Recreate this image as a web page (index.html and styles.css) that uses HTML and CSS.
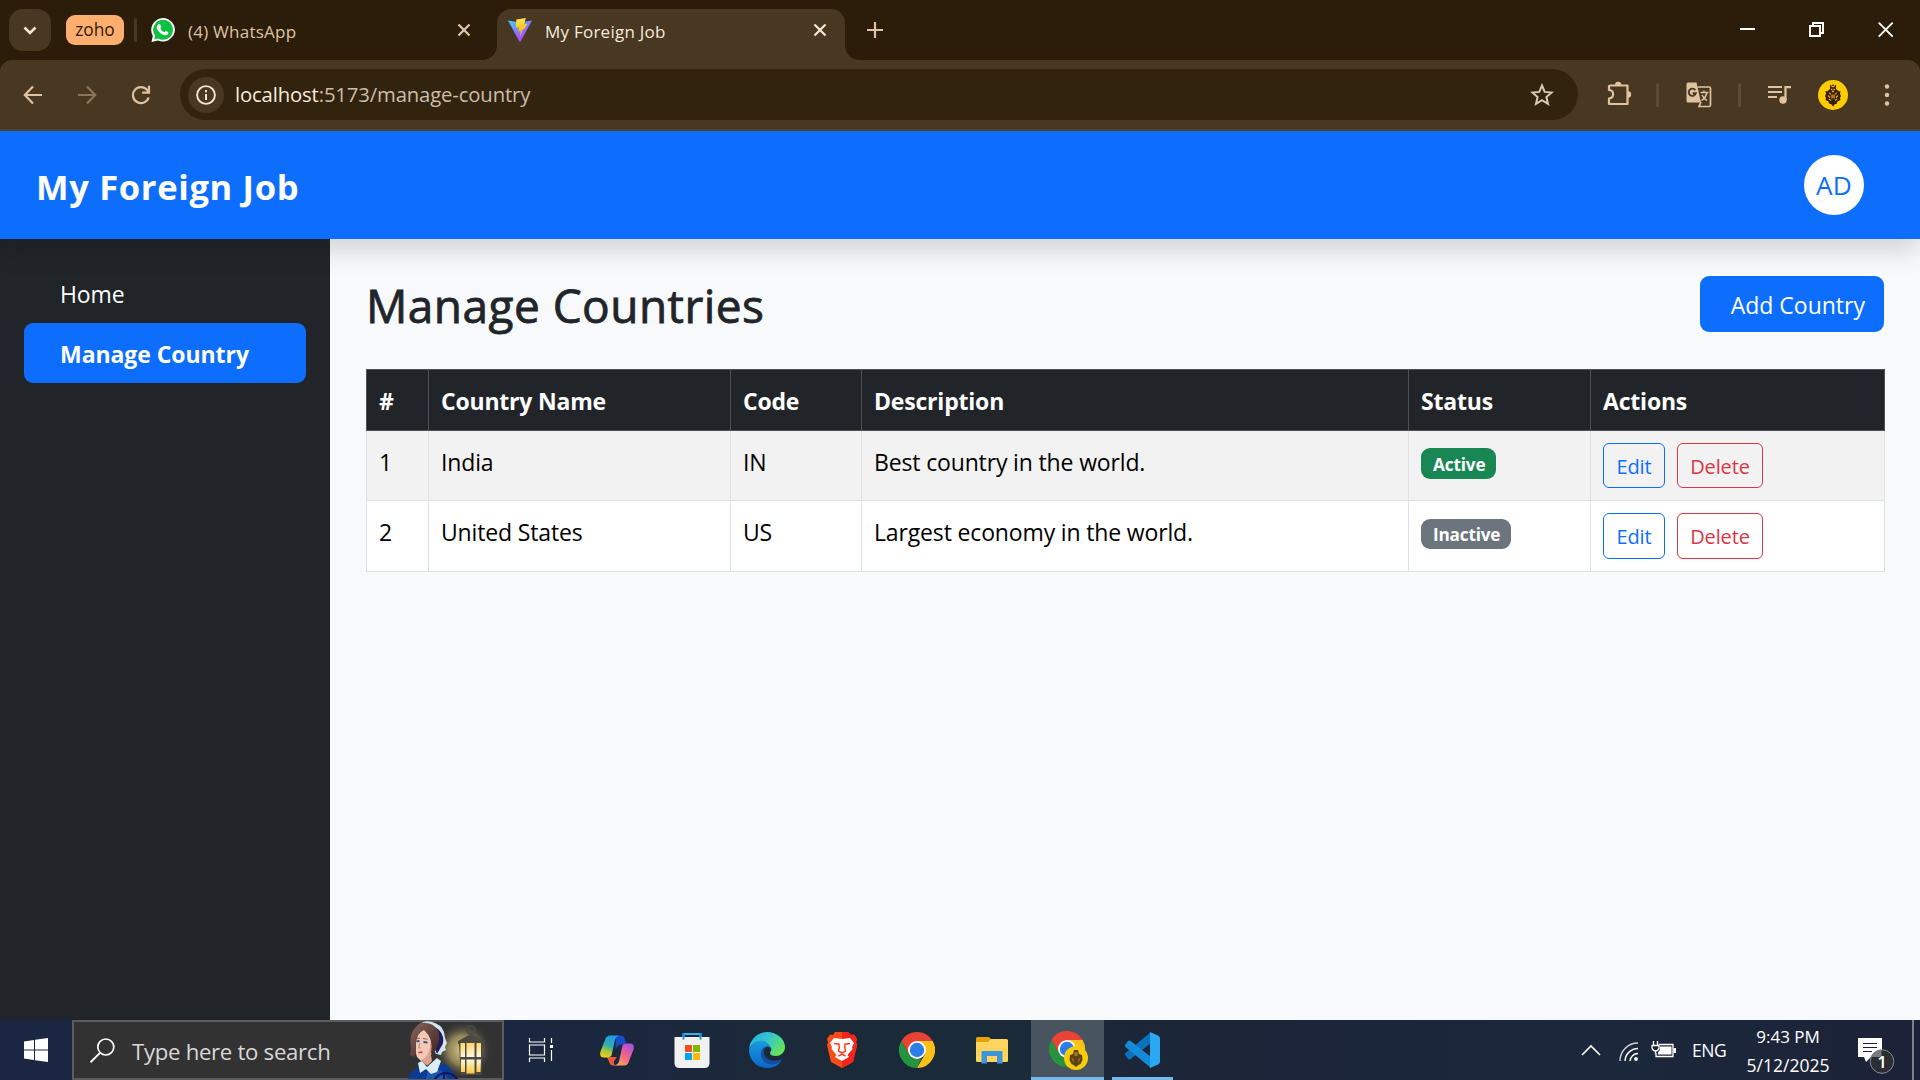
FILE: index.html
```html
<!DOCTYPE html>
<html lang="en">
<head>
<meta charset="utf-8">
<title>My Foreign Job</title>
<link rel="stylesheet" href="styles.css">
</head>
<body>
<div class="screen">
  <div class="tabstrip">
    <div class="tab-search"><svg width="42" height="42" viewBox="0 0 42 42"><path d="M15.500 18.500l5.500 5.500 5.500-5.500" fill="none" stroke="#f3e3cf" stroke-width="2.600"/></svg></div>
    <div class="chip"><span>zoho</span></div>
    <div class="tab-sep"></div>
    <div class="tab tab-whatsapp">
      <svg width="24" height="24" viewBox="0 0 24 24"><path d="M12 0a12 11.700 0 1 1-5 22.400L.500 24l1.300-6A12 12 0 0 1 12 0z" fill="#fff"/><path d="M12 1.800a10 10 0 1 1-5 18.700l-3.800 1.100 1-3.800A10 10 0 0 1 12 1.800z" fill="#0fc143"/><path d="M8.400 6.300c.500 0 .8.100 1 .5l.9 2.100c.1.400-.6 1.200-1 1.600.8 1.700 2.200 3 4 3.800.5-.4 1-1.400 1.500-1.300l2.300 1.100c.5.300.1 1.700-.5 2.300-1.200 1.100-2.900.9-4.500.3-2.700-1-4.900-3.200-6-5.600-.6-1.500-.4-3.100.6-4.200.5-.5 1-.6 1.700-.6z" fill="#fff"/></svg>
      <span class="tab-title">(4) WhatsApp</span>
      <svg width="14" height="14" viewBox="0 0 14 14"><path d="M1.500 1.500l11 11M12.500 1.500l-11 11" stroke="#e0c9ac" stroke-width="2.200"/></svg>
    </div>
    <div class="tab tab-active">
      <svg width="24" height="24" viewBox="0 0 24 24"><defs><linearGradient id="va" x1="0" y1="0" x2=".6" y2="1"><stop offset="0" stop-color="#41d1ff"/><stop offset="1" stop-color="#bd34fe"/></linearGradient><linearGradient id="vb" x1="0" y1="0" x2="0" y2="1"><stop offset="0" stop-color="#ffea50"/><stop offset=".5" stop-color="#ffc61a"/><stop offset="1" stop-color="#ffa800"/></linearGradient></defs><path d="M0 2.500l12 2 12-2L12.600 23.500q-.6.800-1.200 0z" fill="url(#va)"/><path d="M8.300 1.500L17.800 0l-1.700 6.200 3.200-.5-3.100 5.500-1.700.2-2.200 8.200.2-6.700-2 .3.600-4-3.100.5z" fill="url(#vb)"/></svg>
      <span class="tab-title">My Foreign Job</span>
      <svg width="14" height="14" viewBox="0 0 14 14"><path d="M1.500 1.500l11 11M12.500 1.500l-11 11" stroke="#f5e9da" stroke-width="2.200"/></svg>
    </div>
    <svg class="newtab" width="16" height="16" viewBox="0 0 16 16"><path d="M8 0v16M0 8h16" stroke="#dfc3a1" stroke-width="2.200"/></svg>
    <div class="winctl">
      <svg width="16" height="16" viewBox="0 0 16 16"><path d="M0 7h15" stroke="#fff" stroke-width="2"/></svg>
      <svg width="16" height="16" viewBox="0 0 16 16"><path d="M1 4h10v10H1zM4 4V1h10v10h-3" fill="none" stroke="#fff" stroke-width="1.900"/></svg>
      <svg width="16" height="16" viewBox="0 0 16 16"><path d="M.700.700l14 14M14.700.700l-14 14" stroke="#fff" stroke-width="1.900"/></svg>
    </div>
  </div>
  <div class="toolbar-back">
    <div class="toolbar">
      <div class="navbtns">
        <svg width="20" height="20" viewBox="0 0 20 20"><path d="M19 10H2.500M10 1.500L1.800 10l8.200 8.500" fill="none" stroke="#dfc3a1" stroke-width="2.200"/></svg>
        <svg width="20" height="20" viewBox="0 0 20 20"><path d="M1 10h16.500M10 1.500l8.200 8.500-8.200 8.500" fill="none" stroke="#8a755b" stroke-width="2.200"/></svg>
        <svg width="20" height="20" viewBox="0 0 20 20"><path d="M17.600 12.500a8 8 0 1 1-1.300-7.300L18 7.300" fill="none" stroke="#dfc3a1" stroke-width="2.200"/><path d="M18 .8v6.800h-6.800" fill="none" stroke="#dfc3a1" stroke-width="2.200"/></svg>
      </div>
      <div class="urlbar">
        <div class="info"><svg width="20" height="20" viewBox="0 0 20 20"><circle cx="10" cy="10" r="8.900" fill="none" stroke="#f3e3cf" stroke-width="1.900"/><path d="M10 9v6M10 5v2.200" stroke="#f3e3cf" stroke-width="2"/></svg></div>
        <span class="url"><span class="host">localhost</span>:5173/manage-country</span>
        <svg class="star" width="24" height="24" viewBox="0 0 24 24"><path d="M12 2.500l2.700 6.400 6.900.6-5.200 4.500 1.600 6.800-6-3.600-6 3.600 1.600-6.800L2.400 9.500l6.900-.6z" fill="none" stroke="#d8c8b6" stroke-width="2"/></svg>
      </div>
      <svg class="ext" width="26" height="26" viewBox="0 0 26 26"><path d="M3 4.500h17.500v18.500H2v-5.500c5.500-.5 5.500-8 0-8.500V5.500q0-1 1-1z" fill="none" stroke="#dfc3a1" stroke-width="2.200" stroke-linejoin="round"/><path d="M8 4a3.200 3.200 0 0 1 6.400 0zM21 10.300a3.200 3.200 0 0 1 0 6.400z" fill="#dfc3a1"/></svg>
      <i class="bar-sep"></i>
      <svg width="26" height="26" viewBox="0 0 26 26"><path d="M11.500 5H23q1.500 0 1.500 1.500V23q0 1.500-1.500 1.500H13l2-4.500" fill="none" stroke="#dfc3a1" stroke-width="1.700"/><path d="M2 .5h8.500l4.500 20H2q-1.500 0-1.500-1.500V2Q.500.500 2 .500z" fill="#dfc3a1"/><path d="M9.300 8.200A3.600 3.600 0 1 0 9.800 11.300H6.800" fill="none" stroke="#483822" stroke-width="1.900"/><path d="M14.500 10.500h8M18 8.500v2M21 10.500q-1 5-5.500 8M16 13q2 4 5 5.500" fill="none" stroke="#dfc3a1" stroke-width="1.500"/></svg>
      <i class="bar-sep"></i>
      <svg class="playlist" width="24" height="20" viewBox="0 0 24 20"><path d="M0 2h14M0 7h14M0 12h9" stroke="#dfc3a1" stroke-width="2.200"/><path d="M17.500 15V2.100h5.500" fill="none" stroke="#dfc3a1" stroke-width="2.200"/><circle cx="15" cy="15" r="3.700" fill="#dfc3a1"/></svg>
      <svg class="profile" width="30" height="30" viewBox="0 0 30 30"><circle cx="15" cy="15" r="15" fill="#fc0"/><path d="M12 4.500l1.500 1.500L15 4l1.500 2 1.500-1.500V9l3 2.500 1.500-.5-.5 3 1 2-1 2 .5 2-3 1.500-1 2.500-1.500 0-2 2.500-2-2.500-1.500 0-1-2.500-3-1.500.5-2-1-2 1-2-.5-3 1.500.5L12 9z" fill="#33200a"/><path d="M13.500 6.500h3M13 9.500h1.500M15.500 9.500H17M14 11.500h2M11.500 12.500l1 2M18.500 12.500l-1 2M10 15.500l2 2M20 15.500l-2 2M11 19l2 1.500M19 19l-2 1.500M14 14.500v4M16 14.500v4" fill="none" stroke="#f2a51c" stroke-width="1.300"/></svg>
      <svg class="dots" width="6" height="24" viewBox="0 0 6 24"><g fill="#dfc3a1"><circle cx="3" cy="3.500" r="2.200"/><circle cx="3" cy="12" r="2.200"/><circle cx="3" cy="20.500" r="2.200"/></g></svg>
    </div>
  </div>

  <header class="app-header"><div class="brand">My Foreign Job</div><div class="user">AD</div></header>
  <div class="app-body">
    <nav class="sidebar">
      <a class="nav-item">Home</a>
      <a class="nav-item current">Manage Country</a>
    </nav>
    <main class="content">
      <div class="page-head"><h1>Manage Countries</h1><button class="add">Add Country</button></div>
      <table>
        <colgroup><col class="c-num"><col class="c-name"><col class="c-code"><col class="c-desc"><col class="c-status"><col class="c-act"></colgroup>
        <thead><tr><th>#</th><th>Country Name</th><th>Code</th><th>Description</th><th>Status</th><th>Actions</th></tr></thead>
        <tbody>
          <tr><td>1</td><td>India</td><td>IN</td><td>Best country in the world.</td><td><span class="badge green">Active</span></td><td><div class="acts"><button class="btn blue">Edit</button><button class="btn red">Delete</button></div></td></tr>
          <tr><td>2</td><td>United States</td><td>US</td><td>Largest economy in the world.</td><td><span class="badge gray">Inactive</span></td><td><div class="acts"><button class="btn blue">Edit</button><button class="btn red">Delete</button></div></td></tr>
        </tbody>
      </table>
    </main>
  </div>

  <footer class="taskbar">
    <div class="start"><svg width="24" height="24" viewBox="0 0 24 24"><path d="M0 3.400L10 2v9.400H0zM11 1.800L24 0v11.400H11zM0 12.500h10V22L0 20.600zM11 12.500h13V24l-13-1.800z" fill="#fff"/></svg></div>
    <div class="search">
      <svg width="25" height="25" viewBox="0 0 25 25"><circle cx="15.800" cy="9" r="8" fill="none" stroke="#fff" stroke-width="1.700"/><path d="M10 14.800L.500 24.300" stroke="#fff" stroke-width="1.900"/></svg>
      <span>Type here to search</span>
      <svg class="doodle" width="90" height="58" viewBox="0 0 90 58">
        <defs><radialGradient id="glow"><stop offset="0" stop-color="#e3cf82"/><stop offset=".5" stop-color="#a89a66" stop-opacity=".8"/><stop offset="1" stop-color="#323232" stop-opacity="0"/></radialGradient><linearGradient id="lamp" x1="0" y1="0" x2="0" y2="1"><stop offset="0" stop-color="#ffd766"/><stop offset=".5" stop-color="#fffbe6"/><stop offset="1" stop-color="#ffc83d"/></linearGradient><linearGradient id="hair" x1="0" y1="0" x2="1" y2="1"><stop offset="0" stop-color="#8a6557"/><stop offset="1" stop-color="#3a2422"/></linearGradient></defs>
        <circle cx="55" cy="29" r="29" fill="url(#glow)"/>
        <path d="M6 12Q8 5 13 2q5-3 11-1 9 2 12 10l1 6 2 5-2 4 1 3-4 2-1 3-5-1-5-10z" fill="#d3e5ec"/>
        <path d="M24 5q9 3 11 11 1 6-2 10l-4 7-3-8z" fill="#201a63"/>
        <path d="M7 18q3-7 9-11 7 6 7 14l-1 11-1 8-8 0-4-4q-3-8-2-18z" fill="#f3c9b6"/>
        <path d="M23 20l3 5-3 9 1 6-5 5-6-6q6-2 8-9z" fill="#dda08a"/>
        <path d="M3 27Q0 9 13 2q13-2 18 10 1 12-5 20l-3 0q3-14-7-23Q9 12 8 22l0 10-2 4-4-2z" fill="url(#hair)"/>
        <path d="M8.500 20.500l3-.6M15.500 21l4 .6" stroke="#354a86" stroke-width="1.800"/><path d="M9 17.500l3-.4M15 17.500l4.500.7" stroke="#704b40" stroke-width=".8"/><path d="M12 22l-1.500 5h2.500" fill="none" stroke="#c58674"/><path d="M10.500 31.500l4-.2" stroke="#b83f48" stroke-width="1.400"/>
        <path d="M0 58q1-7 7-9l5-6 12 2 8-4q12 4 16 17z" fill="#0b3b93"/>
        <path d="M20 48q12-4 20 10H18z" fill="#1857b6"/>
        <path d="M10 42l4-2 5 6 10-9 4 3-4 11-6 2-5-5-6 4z" fill="#dceef1"/>
        <circle cx="38" cy="65" r="13" fill="none" stroke="#15155c" stroke-width="2.200"/><path d="M36 52v6" stroke="#15155c" stroke-width="2"/>
        <circle cx="63" cy="9" r="4" fill="none" stroke="#4b4a42" stroke-width="2"/><path d="M61 14h4l11 6v3H50v-3z" fill="#4b4a42"/><path d="M51 23h24l-1.500 31H53z" fill="#4b4a42"/><path d="M52.500 22h4.500v14h-4.500zM58.500 22h8v14h-8zM68.500 22H73v14h-4.500zM53 38.500h4v12.500h-4zM58.500 38.500h8v14h-8zM68.500 38.500H73l-.500 12.500h-4z" fill="url(#lamp)"/>
      </svg>
    </div>
    <div class="apps">
      <div class="app view"><svg width="26" height="24" viewBox="0 0 26 24"><path d="M1.500 0v4h15V0M1.500 24v-4h15v4M1.500 7h15v10h-15zM23.500 0v5M23.500 12v11" fill="none" stroke="#fff" stroke-width="1.200"/><path d="M22 7h3v3h-3z" fill="#fff"/></svg></div>
      <div class="app"><svg width="34" height="31" viewBox="0 0 34 31"><defs><linearGradient id="ca" x1=".5" y1="0" x2=".2" y2="1"><stop offset="0" stop-color="#1d9af0"/><stop offset=".45" stop-color="#35b0a4"/><stop offset=".7" stop-color="#a6c93a"/><stop offset="1" stop-color="#f8cc1d"/></linearGradient><linearGradient id="cb" x1=".8" y1="0" x2=".2" y2="1"><stop offset="0" stop-color="#a850e8"/><stop offset=".5" stop-color="#f0608e"/><stop offset="1" stop-color="#ffa25c"/></linearGradient></defs><path d="M16 .500h5q3 0 4 4l1.500 5h-5q-4 0-6 5z" fill="#154cc9"/><path d="M7 22h10l-3 4q-1 4 3 4.500h-4q-3 0-4-4z" fill="#ef5a3b"/><path d="M10 .500h9q-3 1-4 4l-3.500 16q-1 2-4.500 2h-3q-5 0-3.500-6L5 5Q6 .500 10 .500z" fill="url(#ca)"/><path d="M24 30.500h-9q3-1 4-4l3.500-16q1-2 4.500-2h3q5 0 3.500 6L29 26q-1 4.500-5 4.500z" fill="url(#cb)"/></svg></div>
      <div class="app"><svg width="36" height="36" viewBox="0 0 36 36"><path d="M9.500 8V2h17v6" fill="none" stroke="#31b4ee" stroke-width="2.200"/><path d="M.5 5h35v26q0 5-5 5h-25q-5 0-5-5z" fill="#f1f1f1"/><path d="M9.500 1v6.500M26.500 1v6.500" stroke="#168bd1" stroke-width="1.800"/><path d="M11 13h7v7h-7z" fill="#f25022"/><path d="M19 13h7v7h-7z" fill="#7fba00"/><path d="M11 21h7v7h-7z" fill="#00a4ef"/><path d="M19 21h7v7h-7z" fill="#ffb900"/></svg></div>
      <div class="app"><svg width="36" height="36" viewBox="0 0 36 36"><defs><linearGradient id="ea" x1="0" y1="0" x2="1" y2=".6"><stop offset="0" stop-color="#24a8e8"/><stop offset=".5" stop-color="#35c4d0"/><stop offset="1" stop-color="#66e45a"/></linearGradient><linearGradient id="eb" x1="0" y1="0" x2="0" y2="1"><stop offset="0" stop-color="#1a9ae0"/><stop offset="1" stop-color="#0b67c6"/></linearGradient></defs><path d="M0 17C1 7 9 0 18 0c10 0 18 7 18 15 0 6-5 9-9 9-4 0-6-1-6-3 0-1 2-2 1-5C20 10 5 8 0 17z" fill="url(#ea)"/><path d="M0 18C2 11 8 8 14 9c5 1 8 5 8 8-1-2-3-3-5-2-5 2-6 13 3 16 5 2 10 0 13-3C29 34 24 36 18 36 8 36 0 28 0 18z" fill="url(#eb)"/><path d="M12 20q-1 9 8 12 8 2 13-5-6 3-12 1-7-3-6-10 0-2 2-3-4 0-5 5z" fill="#134fa0"/></svg></div>
      <div class="app"><svg width="32" height="36" viewBox="0 0 32 36"><path d="M9 0h13l3 3 3-.500L31 7l-1 3 1 3-4 17-11 6-11-6L1 13l1-3-1-3 3-4.500L7 3z" fill="#ff4b18"/><path d="M16 0h6l3 3 3-.500L31 7l-1 3 1 3-4 17-11 6z" fill="#f6251b"/><path d="M8 6l8 1 8-1 4 5-2 4 .500 2-5 6 1.500 2-7 4-7-4 1.500-2-5-6 .5-2-2-4z" fill="#fff"/><path d="M8 11.500l5 .7v2M24 11.500l-5 .7v2M13.500 14l-1 5 3.500 2 3.500-2-1-5M12.500 24l3.500-2 3.500 2" fill="none" stroke="#fb3d1c" stroke-width="1.500"/></svg></div>
      <div class="app"><svg width="36" height="36" viewBox="0 0 36 36"><g id="chrome"><path d="M2.400 9A18 18 0 0 1 33.600 9H18l-7.800 13.500z" fill="#ea4335"/><path d="M33.600 9A18 18 0 0 1 18 36l7.800-13.500L18 9z" fill="#fbc116"/><path d="M18 36A18 18 0 0 1 2.400 9l7.800 13.500q3 4.500 7.800 4.500l4.500-.5z" fill="#24943e"/><circle cx="18" cy="18" r="9" fill="#fff"/><circle cx="18" cy="18" r="7.200" fill="#2b7de9"/></g></svg></div>
      <div class="app"><svg width="32" height="27" viewBox="0 0 32 27"><path d="M0 1.500Q0 0 1.500 0H13l2 2-2 5H0z" fill="#e3a008"/><path d="M0 5h12l3-3h15.500Q32 2 32 3.500v20q0 1.500-1.500 1.500h-29Q0 25 0 23.500z" fill="#ffd55f"/><path d="M5.500 26.500V15q0-1 1-1h19q1 0 1 1v11.500H21V19H11v7.500z" fill="#3d95dc"/></svg></div>
      <div class="app running"><svg width="40" height="40" viewBox="0 0 40 40"><use href="#chrome"/><circle cx="27" cy="27" r="12" fill="#f9cc0a"/><path d="M25 19h4l1 4 3 1 .5 5-2 4-2 1-2.500 2-2.500-2-2-1-2-4 .5-5 3-1z" fill="#5e4212"/><path d="M25.500 21h3v4h-3zM22.500 27l2 1v4M31.500 27l-2 1v4" fill="#a37a26"/></svg></div>
      <div class="app open"><svg width="36" height="36" viewBox="0 0 36 36"><path d="M1 22.500l3 4.500q1.500 1 3-.200L27 11V0L1.500 21q-1 .7-.5 1.500z" fill="#0a71bd"/><path d="M1 13l3-4q1.500-1 3 .200L27 25v11L1.500 15Q.500 14 1 13z" fill="#158bd8"/><path d="M26 0l8 3.500q2 1 2 3v23q0 2-2 3L26 36z" fill="#29a9f1"/></svg></div>
    </div>
    <div class="tray">
      <svg class="chev" width="20" height="12" viewBox="0 0 20 12"><path d="M1 11l9-9 9 9" fill="none" stroke="#fff" stroke-width="1.600"/></svg>
      <svg class="wifi" width="20" height="20" viewBox="0 0 20 20"><g fill="none" stroke="#fff" stroke-width="1.400"><path d="M1 19A18 18 0 0 1 19 1" opacity=".8"/><path d="M6 19A13 13 0 0 1 19 6.500"/><path d="M11 19a8 8 0 0 1 8-7.500"/></g><circle cx="17" cy="17" r="1.900" fill="#fff"/></svg>
      <svg class="battery" width="25" height="18" viewBox="0 0 25 18"><path d="M8 3.500h14v12H5V12" fill="none" stroke="#fff" stroke-width="1.300"/><path d="M9 5.500h11.500v8H7V11q2-1 2-4zM22.500 7H25v5h-2.500z" fill="#fff"/><path d="M2.500 0v4M6.500 0v4M1 4.500h7V7q-1 3-3.500 3T1 7zM4.500 10v3" fill="none" stroke="#fff" stroke-width="1.300"/></svg>
      <span class="lang">ENG</span>
      <div class="clock"><span class="time">9:43 PM</span><span class="date">5/12/2025</span></div>
      <div class="notif"><svg width="37" height="38" viewBox="0 0 37 38"><path d="M0 0h24v19H13l-5 5-2-5H0z" fill="#fff"/><path d="M5 5.500h14M5 9.500h14M5 13.500h9" stroke="#1c2236" stroke-width="1.200"/><circle cx="24" cy="23.500" r="11.800" fill="#2b2d33" stroke="#8a8d94"/><path d="M13.500 18A12 12 0 0 1 23.500 12v7H13z" fill="#77797e"/></svg><span class="count">1</span></div>
      <i class="peek"></i>
    </div>
  </footer>
</div>
</body>
</html>
```
FILE: styles.css
```css
*{box-sizing:border-box}
body{margin:0;font-family:"Open Sans","Noto Sans",sans-serif;font-size:23px;color:#212529}
svg{display:block;flex:none}
span{white-space:nowrap}
button{font-family:inherit;margin:0}
.screen{width:1920px;height:1080px;display:flex;flex-direction:column;overflow:hidden}

/* browser chrome */
.tabstrip{height:60px;background:#2c1d0a;display:flex;align-items:center;padding-left:9px}
.tab-search{width:42px;height:42px;border-radius:14px;background:#483822}
.chip{margin-left:15px;width:58px;height:30px;border-radius:9px;background:#ffae70;color:#2c1d0a;display:flex;align-items:center;justify-content:center;font-size:17.300px;line-height:30px;padding-bottom:1px}
.tab-sep{width:3px;height:24px;border-radius:2px;background:#483822;margin-left:10px}
.tab{display:flex;align-items:center;font-size:17px;letter-spacing:.24px;color:#dfc3a1}
.tab-whatsapp{width:320px;margin-left:14px}
.tab-active{position:relative;width:348px;height:51px;margin-left:26px;align-self:flex-end;background:#483822;border-radius:14px 14px 0 0;padding:0 18px 9px 11px;color:#f5e9da}
.tab-active::before,.tab-active::after{content:"";position:absolute;bottom:0;width:14px;height:14px}
.tab-active::before{right:100%;background:radial-gradient(circle at 0 0,#2c1d0a 13.500px,#483822 14px)}
.tab-active::after{left:100%;background:radial-gradient(circle at 100% 0,#2c1d0a 13.500px,#483822 14px)}
.tab-title{margin:2px auto 0 13px}
.newtab{margin-left:22px}
.winctl{margin-left:auto;display:flex;gap:53px;padding-right:26px}
.toolbar-back{background:#2c1d0a}
.toolbar{height:71px;background:#483822;border-radius:12px 12px 0 0;border-bottom:2px solid #514330;display:flex;align-items:center}
.navbtns{display:flex;gap:34px;padding-left:23px}
.urlbar{width:1398px;height:51px;border-radius:26px;background:#32230f;margin-left:29px;display:flex;align-items:center;padding:0 24px 0 8px}
.info{width:36px;height:36px;border-radius:50%;background:#483822;display:grid;place-items:center;margin-right:11px}
.url{font-size:20.300px;letter-spacing:-.14px;margin-bottom:2px;color:#cdbda9}
.host{color:#f6ebdd}
.star{margin-left:auto}
.ext{margin:0 23px 2px 29px}
.bar-sep{width:3px;height:24px;border-radius:2px;background:#5d4b33;margin-right:27px}
.bar-sep+svg{margin-right:26px}
.toolbar .playlist{margin-right:26px}
.profile{margin-right:36px}

/* application */
.app-header{position:relative;z-index:1;height:108px;background:#0d6efd;color:#fff;display:flex;align-items:center;justify-content:space-between;padding:0 56px 0 36px;box-shadow:0 12px 24px rgba(0,0,0,.15)}
.brand{font-size:34.500px;font-weight:700;letter-spacing:.68px;padding-top:3px}
.user{width:60px;height:60px;border-radius:50%;background:#fff;color:#0d6efd;font-size:26.200px;letter-spacing:.3px;display:grid;place-items:center;margin-bottom:1px}
.app-body{flex:1;display:flex;min-height:0}
.sidebar{width:330px;flex:none;background:#212529;color:#fff;padding:24px}
.nav-item{display:flex;align-items:center;height:60px;padding:1px 36px 0;border-radius:9px;letter-spacing:-.1px}
.current{background:#0d6efd;font-weight:700;letter-spacing:-.060px}
.content{flex:1;min-width:0;background:#f8f9fb;padding:36px 36px 0}
.page-head{display:flex;justify-content:space-between;align-items:flex-start;height:94px}
h1{font-size:46px;line-height:60px;font-weight:500;-webkit-text-stroke:.8px #212529;letter-spacing:.46px;margin:0}
.add{margin-top:1px;width:184px;height:56px;border:0;border-radius:9px;background:#0d6efd;color:#fff;font-size:23px;padding:2px 19px 0 0;text-align:right}
table{width:1518px;table-layout:fixed;border-collapse:collapse;background:#fff;color:#000;line-height:36px;letter-spacing:-.15px}
.c-num{width:62px}
.c-name{width:302px}
.c-code{width:131px}
.c-desc{width:547px}
.c-status{width:182px}
.c-act{width:294px}
th{height:61px;background:#212529;color:#fff;border:1px solid #4d5154;text-align:left;vertical-align:top;padding:13px 12px 11px;font-weight:700;letter-spacing:-.2px}
td{height:70px;border:1px solid #dee2e6;vertical-align:top;padding:13px 12px 0}
tbody tr:first-child td{background:#f2f2f2}
tbody tr:last-child td{height:71px}
.badge{display:block;width:max-content;height:31px;line-height:33px;margin-top:4px;border-radius:9px;color:#fff;font-size:17.200px;font-weight:700;padding:0 11px 0 12px}
.green{background:#198754}
.gray{background:#6c757d;height:30px;line-height:32px;margin-top:5px;letter-spacing:-.2px}
.acts{display:flex;gap:12px;margin-top:-1px}
.btn{height:46px;border:1px solid;border-radius:6px;background:transparent;font-size:20px;letter-spacing:-.15px;padding:0}
.blue{width:62px;color:#0d6efd}
.red{width:86px;color:#dc3545}
tbody tr:first-child .btn{height:45px;padding-top:1px}

/* taskbar */
.taskbar{height:60px;background:linear-gradient(90deg,#1a2642 0,#1b2640 27%,#1b2a38 45%,#1b2a39 55%,#1c2438 64%,#1b283c 82%,#1c2238 100%);display:flex;color:#fff}
.start{width:72px;display:grid;place-items:center}
.search{width:432px;background:#323232;border:2px solid #5c5c5c;display:flex;align-items:center;padding-left:16px;color:#d8d8d8}
.search span{margin:2px 0 0 17px;font-size:22.200px;letter-spacing:-.3px}
.doodle{margin-left:auto;margin-right:4px}
.apps{display:flex}
.app{width:75px;display:grid;place-items:center}
.view{padding-right:2px}
.running{width:73px;margin:0 1px 0 2px;background:#485460;border-bottom:3px solid #76b9ed;padding:5px 0 0 3px}
.open{padding-right:2px;background:linear-gradient(#76b9ed,#76b9ed) 50% 100%/61px 3px no-repeat}
.tray{margin-left:auto;display:flex;align-items:center;font-size:17px}
.chev{margin-right:18px}
.wifi{margin:3px 12px 0 0}
.battery{margin-right:16px}
.lang{width:33px;font-size:17.500px;letter-spacing:-.4px}
.clock{width:126px;margin-right:7px;display:flex;flex-direction:column;align-items:center;line-height:28px;padding-top:1px}
.date{font-size:17.500px}
.notif{position:relative;height:24px;margin-right:17px}
.count{position:absolute;left:18px;top:12px;width:12px;line-height:24px;text-align:center;font-size:17px;font-weight:600}
.peek{width:2px;height:60px;background:#7d818c;margin-right:6px}
```
